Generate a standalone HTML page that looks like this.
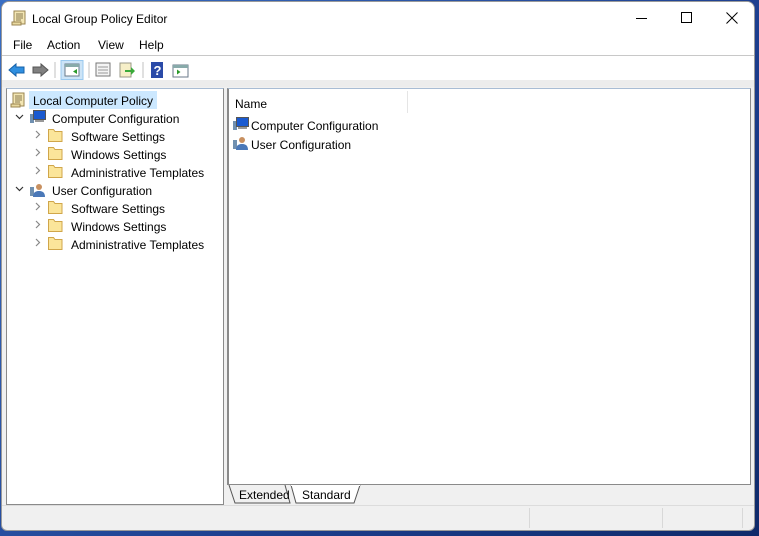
<!DOCTYPE html>
<html><head><style>
*{margin:0;padding:0;box-sizing:border-box}
body{width:759px;height:536px;overflow:hidden;background:linear-gradient(135deg,#3a6fc4,#1d3f8f 60%,#0f2a6a);font-family:"Liberation Sans",sans-serif;font-size:12px;color:#000;position:relative}
.win{position:absolute;left:1px;top:1px;width:754px;height:530px;background:#f0f0f0;border-radius:8px 8px 6px 6px;overflow:hidden;border:1px solid #9a9a9a}
.abs{position:absolute}
.t{position:absolute;white-space:nowrap;font-size:12px;line-height:14px}
</style></head><body>
<div class="win">
 <div class="abs" style="left:0;top:0;width:753px;height:53px;background:#fff"></div>
 <div class="abs" style="left:0;top:53px;width:753px;height:1px;background:#c8c8c8"></div>
 <div class="abs" style="left:0;top:54px;width:753px;height:24px;background:#fff"></div>
 <div class="abs" style="left:0;top:78px;width:753px;height:7px;background:#ececec"></div>
 <svg class="abs" style="left:9px;top:8px" width="16" height="16"><rect x="3" y="1" width="11" height="13" fill="#f3e6b4" stroke="#9a8450"/><path d="M5 4h7M5 6h7M5 8h7M5 10h5" stroke="#8a7a50"/><rect x="1" y="12" width="9" height="3" fill="#e8d9a0" stroke="#9a8450"/></svg>
 <div class="t" style="left:30px;top:10px">Local Group Policy Editor</div>
 <div class="abs" style="left:634px;top:16px;width:11px;height:1px;background:#000"></div>
 <div class="abs" style="left:679px;top:10px;width:11px;height:11px;border:1px solid #000"></div>
 <svg class="abs" style="left:724px;top:10px" width="12" height="12"><path d="M0.5 0.5L11.5 11.5M11.5 0.5L0.5 11.5" stroke="#000"/></svg>
 <div class="t" style="left:11px;top:36px">File</div>
 <div class="t" style="left:45px;top:36px">Action</div>
 <div class="t" style="left:96px;top:36px">View</div>
 <div class="t" style="left:137px;top:36px">Help</div>
 <svg class="abs" style="left:5px;top:58px" width="190" height="20">
  <path d="M2 10l7-6v3h8v6h-8v3z" fill="#2f8fe0" stroke="#1560a8"/>
  <path d="M41 10l-7-6v3h-8v6h8v3z" fill="#808080" stroke="#555"/>
  <line x1="48" y1="2" x2="48" y2="18" stroke="#c0c0c0"/>
  <rect x="54" y="0.5" width="22" height="19" fill="#cce4f7" stroke="#99c9ef"/>
  <rect x="58" y="4" width="14" height="12" fill="#fff" stroke="#6a7a8a"/><rect x="58" y="4" width="14" height="3" fill="#8aa"/><path d="M70 9l-4 2.5 4 2.5z" fill="#2a9a2a"/>
  <line x1="82" y1="2" x2="82" y2="18" stroke="#c0c0c0"/>
  <rect x="89" y="3" width="14" height="13" fill="#f4f4f4" stroke="#777"/><path d="M91 7h10M91 10h10M91 13h10" stroke="#999"/>
  <rect x="113" y="3" width="11" height="14" fill="#f6efc8" stroke="#998"/><path d="M118 10h6v-3l4 4-4 4v-3h-6z" fill="#3aaa3a"/>
  <line x1="136" y1="2" x2="136" y2="18" stroke="#c0c0c0"/>
  <rect x="144" y="2" width="12" height="16" fill="#2a4aa8"/><text x="146.5" y="15" fill="#fff" font-size="13" font-weight="bold" font-family="Liberation Sans">?</text>
  <rect x="166" y="5" width="15" height="12" fill="#fff" stroke="#6a7a8a"/><rect x="166" y="5" width="15" height="3" fill="#8aa"/><path d="M170 9.5l3.5 2.5-3.5 2.5z" fill="#2a9a2a"/>
 </svg>
 <div class="abs" style="left:4px;top:86px;width:218px;height:417px;background:#fff;border:1px solid #8a8a8a;border-top-color:#a8bcd4"></div>
 <div class="abs" style="left:27px;top:89px;width:128px;height:18px;background:#cce8ff"></div>
 <svg class="abs" style="left:8px;top:90px" width="16" height="16"><rect x="3" y="1" width="11" height="13" fill="#f3e6b4" stroke="#9a8450"/><path d="M5 4h7M5 6h7M5 8h7M5 10h5" stroke="#8a7a50"/><rect x="1" y="12" width="9" height="3" fill="#e8d9a0" stroke="#9a8450"/></svg>
 <div class="t" style="left:31px;top:92px">Local Computer Policy</div>
 <svg class="abs" style="left:0;top:105px" width="70" height="150">
  <g fill="none" stroke="#333" stroke-width="1.2"><path d="M14 8l3.5 3.5L21 8"/><path d="M14 80l3.5 3.5L21 80"/></g>
  <g fill="none" stroke="#888" stroke-width="1.2"><path d="M34 24l3.5 3.5L34 31"/><path d="M34 42l3.5 3.5L34 49"/><path d="M34 60l3.5 3.5L34 67"/><path d="M34 96l3.5 3.5L34 103"/><path d="M34 114l3.5 3.5L34 121"/><path d="M34 132l3.5 3.5L34 139"/></g>
  <g fill="#fbe59a" stroke="#d0a64a"><path d="M46.5 22.5h5l1.5 2h7v10h-13.5z"/><path d="M46.5 40.5h5l1.5 2h7v10h-13.5z"/><path d="M46.5 58.5h5l1.5 2h7v10h-13.5z"/><path d="M46.5 94.5h5l1.5 2h7v10h-13.5z"/><path d="M46.5 112.5h5l1.5 2h7v10h-13.5z"/><path d="M46.5 130.5h5l1.5 2h7v10h-13.5z"/></g>
  <rect x="28" y="7" width="4" height="9" fill="#7090b0"/><rect x="31.5" y="3.5" width="12" height="9" fill="#1a5ad0" stroke="#555"/><rect x="33" y="13" width="9" height="2" fill="#999"/>
  <rect x="28" y="80" width="4" height="9" fill="#7090b0"/><circle cx="37" cy="80" r="3" fill="#c89060"/><path d="M31 90c0-5 3-6 6-6s6 1 6 6z" fill="#4a78b8"/>
 </svg>
 <div class="t" style="left:50px;top:110px">Computer Configuration</div>
 <div class="t" style="left:69px;top:128px">Software Settings</div>
 <div class="t" style="left:69px;top:146px">Windows Settings</div>
 <div class="t" style="left:69px;top:164px">Administrative Templates</div>
 <div class="t" style="left:50px;top:182px">User Configuration</div>
 <div class="t" style="left:69px;top:200px">Software Settings</div>
 <div class="t" style="left:69px;top:218px">Windows Settings</div>
 <div class="t" style="left:69px;top:236px">Administrative Templates</div>
 <div class="abs" style="left:225px;top:86px;width:524px;height:397px;background:#fff;border:1px solid #8a8a8a;border-top-color:#a8bcd4;border-left-width:2px"></div>
 <div class="abs" style="left:405px;top:89px;width:1px;height:22px;background:#e5e5e5"></div>
 <div class="t" style="left:233px;top:95px">Name</div>
 <svg class="abs" style="left:229px;top:115px" width="20" height="40">
  <rect x="2" y="4" width="4" height="9" fill="#7090b0"/><rect x="5.5" y="0.5" width="12" height="9" fill="#1a5ad0" stroke="#555"/><rect x="7" y="10" width="9" height="2" fill="#999"/>
  <rect x="2" y="23" width="4" height="9" fill="#7090b0"/><circle cx="11" cy="23" r="3" fill="#c89060"/><path d="M5 33c0-5 3-6 6-6s6 1 6 6z" fill="#4a78b8"/>
 </svg>
 <div class="t" style="left:249px;top:117px">Computer Configuration</div>
 <div class="t" style="left:249px;top:136px">User Configuration</div>
 <svg class="abs" style="left:225px;top:483px" width="140" height="20">
  <path d="M2 0L8 18H63L58 0" fill="#f0f0f0" stroke="#555"/>
  <path d="M64 0L69 18H127L133 0" fill="#fff" stroke="#555"/>
  <line x1="64" y1="0" x2="133" y2="0" stroke="#fff" stroke-width="2"/>
 </svg>
 <div class="t" style="left:237px;top:486px">Extended</div>
 <div class="t" style="left:300px;top:486px">Standard</div>
 <div class="abs" style="left:0;top:503px;width:753px;height:1px;background:#dcdcdc"></div>
 <div class="abs" style="left:527px;top:506px;width:1px;height:20px;background:#d8d8d8"></div>
 <div class="abs" style="left:660px;top:506px;width:1px;height:20px;background:#d8d8d8"></div>
 <div class="abs" style="left:740px;top:506px;width:1px;height:20px;background:#d8d8d8"></div>
</div>
</body></html>
